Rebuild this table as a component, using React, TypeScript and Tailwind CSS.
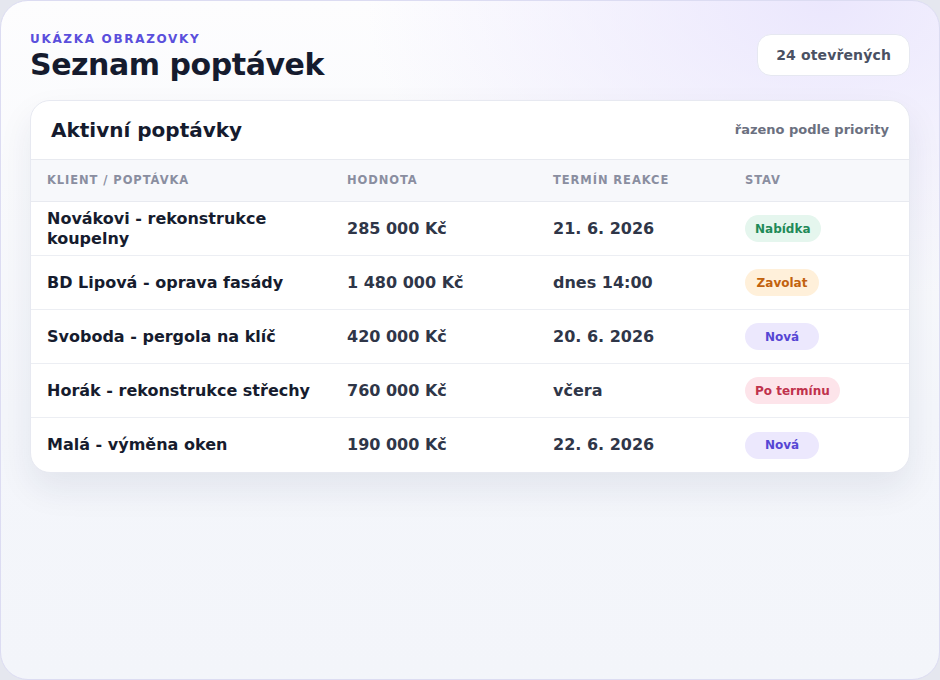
import React from 'react'

type Row = {
  name: string
  value: string
  due: string
  status: 'offer' | 'call' | 'new' | 'late'
}

const rows: Row[] = [
  { name: 'Novákovi - rekonstrukce koupelny', value: '285 000 Kč', due: '21. 6. 2026', status: 'offer' },
  { name: 'BD Lipová - oprava fasády', value: '1 480 000 Kč', due: 'dnes 14:00', status: 'call' },
  { name: 'Svoboda - pergola na klíč', value: '420 000 Kč', due: '20. 6. 2026', status: 'new' },
  { name: 'Horák - rekonstrukce střechy', value: '760 000 Kč', due: 'včera', status: 'late' },
  { name: 'Malá - výměna oken', value: '190 000 Kč', due: '22. 6. 2026', status: 'new' },
]

const badges = {
  offer: { label: 'Nabídka', cls: 'bg-[#e5f6ee] text-[#1f8a58]' },
  call: { label: 'Zavolat', cls: 'bg-[#fff0da] text-[#c2620e]' },
  new: { label: 'Nová', cls: 'bg-[#ece8fd] text-[#5646d4]' },
  late: { label: 'Po termínu', cls: 'bg-[#fde4ea] text-[#c0324c]' },
}

function StatusBadge({ status }: { status: Row['status'] }) {
  const b = badges[status]
  return (
    <span className={`inline-flex h-[27px] min-w-[74px] items-center justify-center rounded-full px-2.5 text-[12px] font-bold ${b.cls}`}>
      {b.label}
    </span>
  )
}

export default function App() {
  return (
    <div className="min-h-screen bg-[#e5e7ef] font-['DejaVu_Sans',sans-serif]">
      <div className="h-[680px] w-[940px] overflow-hidden rounded-[28px] border border-[#dcdcf2] bg-[radial-gradient(ellipse_460px_300px_at_88%_0%,#ebe7fd_0%,rgba(235,231,253,0)_100%),linear-gradient(180deg,#fdfdfe_0%,#f4f6fb_60%,#f3f5fa_100%)] px-[29px] pt-[30px]">
        {/* header */}
        <div className="flex items-start justify-between">
          <div>
            <div className="text-[12px] font-bold leading-4 tracking-[0.14em] text-[#5a4fdc]">UKÁZKA OBRAZOVKY</div>
            <h1 className="text-[30px] font-bold leading-[36px] tracking-[-0.015em] text-[#151b2e]">Seznam poptávek</h1>
          </div>
          <div className="mt-[3px] flex h-[42px] items-center rounded-[14px] border border-[#e6e8f1] bg-white px-[18px] text-[14px] font-bold tracking-[0.01em] text-[#4a5163]">
            24 otevřených
          </div>
        </div>

        {/* card */}
        <div className="mt-[17px] overflow-hidden rounded-[20px] border border-[#e7e9f1] bg-white shadow-[0_16px_34px_rgba(30,40,80,0.08)]">
          <div className="flex h-[59px] items-center justify-between border-b border-[#e8eaf0] px-[20px]">
            <h2 className="text-[20px] font-bold text-[#151b2e]">Aktivní poptávky</h2>
            <span className="text-[13px] font-bold text-[#6b7080]">řazeno podle priority</span>
          </div>

          <div className="grid h-[42px] grid-cols-[300px_206px_192px_1fr] items-center border-b border-[#e8eaf0] bg-[#f7f8fb] px-4 text-[11.5px] font-bold uppercase tracking-[0.08em] text-[#8a8ea0]">
            <span>Klient / poptávka</span>
            <span>Hodnota</span>
            <span>Termín reakce</span>
            <span>Stav</span>
          </div>

          {rows.map((r, i) => (
            <div
              key={r.name}
              className={`grid h-[54px] grid-cols-[300px_206px_192px_1fr] items-center px-4 ${i < rows.length - 1 ? 'border-b border-[#eceef3]' : ''}`}
            >
              <span className="pr-4 text-[16px] font-bold leading-5 text-[#161c2e]">{r.name}</span>
              <span className="text-[16px] font-bold text-[#2f3648]">{r.value}</span>
              <span className="text-[16px] font-bold text-[#2f3648]">{r.due}</span>
              <span>
                <StatusBadge status={r.status} />
              </span>
            </div>
          ))}
        </div>
      </div>
    </div>
  )
}
